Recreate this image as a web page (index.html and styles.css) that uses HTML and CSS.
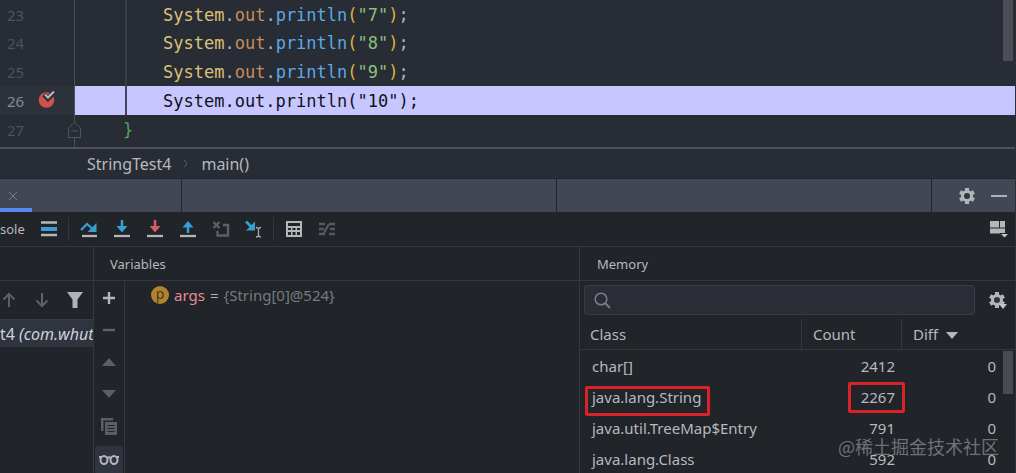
FILE: index.html
```html
<!DOCTYPE html>
<html lang="en">
<head>
<meta charset="utf-8">
<title>StringTest4</title>
<link rel="stylesheet" href="styles.css">
</head>
<body>
<main class="ide">
  <section class="editor">
    <div class="line"><span class="gutter">23</span><i class="guide"></i><code><b class="cls">System</b>.<b class="fld">out</b>.<b class="fn">println</b><b class="par">(</b><b class="str">"7"</b><b class="par">)</b>;</code></div>
    <div class="line"><span class="gutter">24</span><i class="guide"></i><code><b class="cls">System</b>.<b class="fld">out</b>.<b class="fn">println</b><b class="par">(</b><b class="str">"8"</b><b class="par">)</b>;</code></div>
    <div class="line"><span class="gutter">25</span><i class="guide"></i><code><b class="cls">System</b>.<b class="fld">out</b>.<b class="fn">println</b><b class="par">(</b><b class="str">"9"</b><b class="par">)</b>;</code></div>
    <div class="line current"><span class="gutter">26
      <svg class="breakpoint" width="18" height="20" viewBox="0 0 18 20"><circle cx="8.500" cy="11" r="7.800" fill="#cf504d"/><path d="M6 5.500l4 4 7-7" fill="none" stroke="#2b2e38" stroke-width="5"/><path d="M7 5.500l3 3 6-6" fill="none" stroke="#b9bcc2" stroke-width="2"/></svg></span><i class="guide"></i><code>System.out.println("10");</code></div>
    <div class="line last"><span class="gutter">27
      <svg class="fold" width="15" height="18" viewBox="0 0 15 18"><path d="M1.500 16.500V7l6-5.500 6 5.500v9.500zM4 10h7" fill="#282c34" stroke="#50545c"/></svg></span><code class="brace">}</code></div>
    <div class="editor-thumb"></div>
  </section>

  <nav class="crumbs"><span>StringTest4</span><svg width="6" height="9" viewBox="0 0 6 9"><path d="M1 0.500l3 4-3 4" fill="none" stroke="#5b5f67"/></svg><span>main()</span></nav>

  <div class="tabs">
    <div class="tab first"><button class="close" aria-label="Close tab"><svg width="10" height="10" viewBox="0 0 10 10"><path d="M1 1l8 8M9 1L1 9" stroke="#737986"/></svg></button></div>
    <div class="tab"></div>
    <div class="tab"></div>
    <div class="tab-actions">
      <button aria-label="Settings"><svg width="18" height="18" viewBox="-9 -9 18 18"><use href="#gear"/></svg></button>
      <button aria-label="Hide"><svg width="16" height="4" viewBox="0 0 16 4"><path d="M0 2h16" stroke="#adb3bd" stroke-width="2"/></svg></button>
    </div>
  </div>

  <div class="toolbar">
    <span class="console">sole</span>
    <button aria-label="Menu"><svg width="16" height="16" viewBox="0 0 16 16"><path d="M0 1.500h16M0 14h16" stroke="#b4b7ba" stroke-width="2.500"/><path d="M0 8h16" stroke="#389fd6" stroke-width="4"/></svg></button>
    <i class="sep"></i>
    <button aria-label="Step over"><svg width="18" height="18" viewBox="0 0 18 18"><path d="M1 10l6-6 7 6" fill="none" stroke="#389fd6" stroke-width="2.300"/><path d="M16.500 3v9h-9z" fill="#389fd6"/><path d="M2 16h15" stroke="#b4b7ba" stroke-width="2.300"/></svg></button>
    <button aria-label="Step into"><svg width="18" height="18" viewBox="0 0 18 18"><path d="M9 0v7" stroke="#389fd6" stroke-width="2.500"/><path d="M3.500 6h11L9 12.500z" fill="#389fd6"/><path d="M1 16h16" stroke="#b4b7ba" stroke-width="2.300"/></svg></button>
    <button aria-label="Force step into"><svg width="18" height="18" viewBox="0 0 18 18"><path d="M9 0v7" stroke="#db5c5c" stroke-width="2.500"/><path d="M3.500 6h11L9 12.500z" fill="#db5c5c"/><path d="M1 16h16" stroke="#b4b7ba" stroke-width="2.300"/></svg></button>
    <button aria-label="Step out"><svg width="18" height="18" viewBox="0 0 18 18"><path d="M9 13V6" stroke="#389fd6" stroke-width="2.500"/><path d="M3.500 7.500h11L9 1z" fill="#389fd6"/><path d="M1 16h16" stroke="#b4b7ba" stroke-width="2.300"/></svg></button>
    <button aria-label="Drop frame"><svg width="18" height="18" viewBox="0 0 18 18"><path d="M1.500 2l6 6M7.500 2l-6 6M11 5h5v10.500H5.500V11" fill="none" stroke="#5d6164" stroke-width="2.300"/></svg></button>
    <button aria-label="Run to cursor"><svg width="20" height="18" viewBox="0 0 20 18"><path d="M2 1.500l6 6" stroke="#35a2cc" stroke-width="2.700"/><path d="M11 1.500v9H2z" fill="#35a2cc"/><path d="M12 7.500q2 0 2.500 1.500 0.500-1.500 2.500-1.500M14.500 9v7M12 17q2 0 2.500-1.500 0.500 1.500 2.500 1.500" fill="none" stroke="#a5a9ab" stroke-width="1.300"/></svg></button>
    <i class="sep"></i>
    <button aria-label="Evaluate"><svg width="16" height="16" viewBox="0 0 16 16"><path fill-rule="evenodd" fill="#b4b7ba" d="M0 0h16v16H0zM2 2v3h12V2zM2 7v2h3V7zm4.500 0v2h3V7zM11 7v2h3V7zM2 11v3h3v-3zm4.500 0v3h3v-3zM11 11v3h3v-3z"/></svg></button>
    <button aria-label="Trace"><svg width="16" height="14" viewBox="0 0 16 14"><path d="M0 2h6M10 2h6M0 7h5M11 7h5M0 12h6M10 12h6M5 11l5-9" fill="none" stroke="#56595d" stroke-width="2.300"/></svg></button>
    <button class="layout" aria-label="Layout"><svg width="20" height="18" viewBox="0 0 20 18"><path d="M1 1h9v6.500H1zM11 1h5v6.500h-5zM1 8.500h15v5H1z" fill="#b4b7ba"/><path d="M11 13.500h9L15.500 18z" fill="#c4c6c9" stroke="#212429"/></svg></button>
  </div>

  <div class="panels">
    <section class="frames">
      <header></header>
      <div class="frame-tools">
        <button aria-label="Up"><svg width="14" height="16" viewBox="0 0 14 16"><path d="M7 15V2M1.500 7.500L7 2l5.500 5.500" fill="none" stroke="#5d6165" stroke-width="2"/></svg></button>
        <button aria-label="Down"><svg width="14" height="16" viewBox="0 0 14 16"><path d="M7 1v13M1.500 8.500L7 14l5.500-5.500" fill="none" stroke="#5d6165" stroke-width="2"/></svg></button>
        <button aria-label="Filter"><svg width="16" height="16" viewBox="0 0 16 16"><path d="M0 0h16l-5.500 7.500V16h-5V7.500z" fill="#afb3b8"/></svg></button>
      </div>
      <div class="frame">t4 <em>(com.whut</em></div>
    </section>

    <section class="variables">
      <header>Variables</header>
      <div class="var-body">
        <div class="var-tools">
          <button aria-label="Add"><svg width="14" height="14" viewBox="0 0 14 14"><path d="M7 1v12M1 7h12" stroke="#b4b7ba" stroke-width="2.400"/></svg></button>
          <button aria-label="Remove"><svg width="14" height="14" viewBox="0 0 14 14"><path d="M1 7h12" stroke="#5d6165" stroke-width="2.400"/></svg></button>
          <button aria-label="Move up"><svg width="14" height="8" viewBox="0 0 14 8"><path d="M0 8l7-8 7 8z" fill="#5b5f63"/></svg></button>
          <button aria-label="Move down"><svg width="14" height="8" viewBox="0 0 14 8"><path d="M0 0h14L7 8z" fill="#5b5f63"/></svg></button>
          <button aria-label="Copy"><svg width="16" height="17" viewBox="0 0 16 17"><path d="M0 0h12v2.500H2.500V13H0z" fill="#5b5f63"/><path fill-rule="evenodd" d="M4 4h12v13H4zm2.500 3v1h7V7zm0 3v1h7v-1zm0 3v1h7v-1z" fill="#5b5f63"/></svg></button>
          <button class="on" aria-label="Watches"><svg width="20" height="12" viewBox="0 0 20 12"><path d="M0 3h3M17 3h3M8 4q2-1.500 4 0" fill="none" stroke="#b4b7ba" stroke-width="2"/><ellipse cx="5" cy="6" rx="3.500" ry="4" fill="none" stroke="#b4b7ba" stroke-width="2"/><ellipse cx="15" cy="6" rx="3.500" ry="4" fill="none" stroke="#b4b7ba" stroke-width="2"/></svg></button>
        </div>
        <div class="var"><span class="badge">p</span><span class="name">args</span><span>=</span><span class="value">{String[0]@524}</span></div>
      </div>
    </section>

    <section class="memory">
      <header>Memory</header>
      <div class="search-row">
        <label class="search"><svg width="17" height="17" viewBox="0 0 17 17"><circle cx="7" cy="7" r="5.800" fill="none" stroke="#7b7f87" stroke-width="1.500"/><path d="M11 11l5 5" stroke="#7b7f87" stroke-width="1.800"/></svg><input type="text" aria-label="Search classes"></label>
        <button aria-label="Memory settings"><svg width="20" height="18" viewBox="-9 -9 20 18"><use href="#gear"/><path d="M2 4h8L6 9z" fill="#c3c5c9"/></svg></button>
      </div>
      <table>
        <thead><tr><th class="c1">Class</th><th class="c2">Count</th><th>Diff <svg width="12" height="7" viewBox="0 0 12 7"><path d="M0 0h12L6 7z" fill="#b4b7ba"/></svg></th></tr></thead>
        <tbody>
          <tr><td>char[]</td><td>2412</td><td>0</td></tr>
          <tr><td><span class="mark name-mark">java.lang.String</span></td><td><span class="mark count-mark">2267</span></td><td>0</td></tr>
          <tr><td>java.util.TreeMap$Entry</td><td>791</td><td>0</td></tr>
          <tr><td>java.lang.Class</td><td>592</td><td>0</td></tr>
        </tbody>
      </table>
      <div class="table-thumb"></div>
    </section>
  </div>
  <div class="watermark">@稀土掘金技术社区</div>
</main>
<svg class="defs" width="0" height="0"><defs><g id="gear"><g fill="#b2b5ba"><rect x="-2" y="-8" width="4" height="16"/><rect x="-2" y="-8" width="4" height="16" transform="rotate(60)"/><rect x="-2" y="-8" width="4" height="16" transform="rotate(120)"/></g><circle r="4.500" fill="none" stroke="#b2b5ba" stroke-width="3"/><circle r="3" fill="#30343d"/></g></defs></svg>
</body>
</html>
```
FILE: styles.css
```css
* { box-sizing: border-box; }
body { margin: 0; background: #212429; color: #b6b9be; font: 15px "Noto Sans", "Open Sans", sans-serif; }
button { display: flex; align-items: center; justify-content: center; padding: 0; border: 0; background: none; }
svg { display: block; flex: none; }
.defs { position: absolute; }
.ide { position: relative; display: flex; flex-direction: column; height: 100vh; overflow: hidden; border-right: 1px solid #2b2f36; }

.editor { position: relative; flex: none; background: #282c34; border-bottom: 2px solid #4e5157; }
.line { display: flex; height: 29px; line-height: 31px; }
.line:first-child { height: 28px; }
.line.last { height: 32px; }
.gutter { position: relative; width: 75px; padding-left: 7px; border-right: 1px solid #4b4f57; color: #4d525d; }
.guide { width: 2px; margin-left: 50px; background: #393d45; }
code { margin-left: 36px; white-space: pre; color: #abb2bf; font-family: "DejaVu Sans Mono", monospace; font-size: 17px; }
code b { font-weight: normal; }
.brace { margin-left: 48px; color: #55a25c; }
.cls { color: #dcc07a; }
.fld { color: #c58c5c; }
.fn { color: #5ba9e6; }
.par { color: #deb13e; }
.str { color: #8cc07a; }
.current { background: #c7c6ff; }
.current .gutter { background: #2c313a; color: #858b96; }
.current .guide { background: #41435f; }
.current code { color: #121220; }
.breakpoint { position: absolute; left: 38px; top: 3px; }
.fold { position: absolute; left: 67px; top: 6px; }
.editor-thumb { position: absolute; right: 2px; top: 0; width: 10px; height: 61px; background: #4b4e54; }

.crumbs { display: flex; flex: none; align-items: center; gap: 12px; height: 29px; padding-left: 87px; background: #282c34; font-size: 16px; }
.tabs { display: flex; flex: none; height: 34px; background: #414754; border-top: 1px solid #20242b; }
.tab { width: 375px; border-right: 1px solid #22262e; }
.tab.first { position: relative; width: 182px; }
.close { width: 26px; height: 100%; }
.tab.first::after { content: ""; position: absolute; left: 0; bottom: 0; width: 32px; height: 4px; background: #568af2; }
.tab-actions { display: flex; flex: 1; justify-content: flex-end; gap: 15px; padding-right: 8px; }

.toolbar { display: flex; flex: none; align-items: center; height: 35px; border-bottom: 1px solid #34383d; }
.toolbar button { width: 33px; height: 100%; }
.console { width: 32px; font-size: 13px; }
.sep { width: 1px; height: 24px; margin: 0 3px; background: #33373c; }
.toolbar .layout { margin-left: auto; }

.panels { display: flex; flex: 1; min-height: 0; }
header { height: 34px; line-height: 34px; padding-left: 16px; border-bottom: 1px solid #34383d; font-size: 13px; }
.frames { width: 93px; overflow: hidden; }
.frame-tools { display: flex; height: 38px; }
.frame-tools button { width: 33px; }
.frame-tools button:first-child { width: 25px; padding-right: 7px; }
.frame { height: 28px; line-height: 28px; overflow: hidden; white-space: nowrap; background: #2f343f; border-top: 1px solid #373c45; color: #d0d3d8; font-size: 16px; }
.variables { display: flex; flex: 1; flex-direction: column; border: solid #34383d; border-width: 0 1px; }
.var-body { display: flex; flex: 1; min-height: 0; }
.var-tools { width: 31px; padding-top: 1px; border-right: 1px solid #34383d; }
.var-tools button { width: 30px; height: 32px; }
.var-tools .on { width: 28px; margin: 4px 1px 0; height: 28px; background: #30343e; border-radius: 3px; }
.var { display: flex; align-items: center; gap: 5px; height: 27px; padding-left: 26px; }
.badge { width: 18px; height: 18px; border-radius: 9px; background: #b0842f; color: #4a3a1c; text-align: center; font-size: 14px; line-height: 16px; }
.name { color: #ea8b93; }
.value { color: #777b80; }

.memory { position: relative; width: 435px; }
.memory header { padding-left: 17px; }
.search-row { display: flex; align-items: center; gap: 13px; padding: 4px 7px 4px 4px; }
.search { display: flex; flex: 1; align-items: center; height: 30px; padding-left: 9px; background: #2a2d36; border: 1px solid #393d42; border-radius: 3px; }
.search input { flex: 1; min-width: 0; border: 0; outline: 0; background: none; color: inherit; font: inherit; }
table { width: 100%; border-collapse: separate; border-spacing: 0; table-layout: fixed; }
th { height: 31px; padding: 0 0 0 11px; border-right: 1px solid #34383d; border-bottom: 1px solid #34383d; font-weight: normal; text-align: left; }
th:last-child { border-right: 0; }
th svg { display: inline-block; margin-left: 4px; vertical-align: 1px; }
.c1 { width: 222px; padding-left: 10px; }
.c2 { width: 100px; }
td { height: 31px; padding: 0 7px 0 12px; text-align: right; white-space: nowrap; }
td:first-child { text-align: left; }
td:last-child { padding-right: 19px; }
.mark { position: relative; }
.mark::after { content: ""; position: absolute; border: 3px solid #d8232b; border-radius: 2px; }
.name-mark::after { inset: -1px -9px -9px -7px; }
.count-mark::after { inset: -5px -10px -6px -13px; }
.table-thumb { position: absolute; right: 2px; top: 104px; width: 10px; height: 43px; background: #484b51; }
.watermark { position: absolute; right: 16px; bottom: 14px; color: rgba(190, 193, 198, 0.5); font: 18px/26px "Noto Sans CJK SC", sans-serif; }
```
